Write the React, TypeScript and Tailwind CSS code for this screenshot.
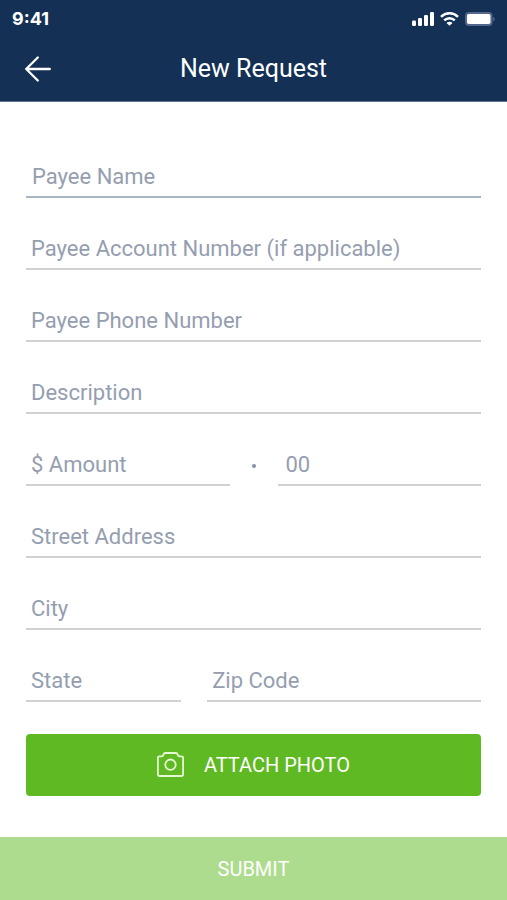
import type { InputHTMLAttributes } from "react";

type FieldProps = Omit<InputHTMLAttributes<HTMLInputElement>, "className"> & {
  label: string;
  active?: boolean;
  inset?: "sm" | "md" | "lg";
};

const insets = {
  sm: "px-[5px]",
  md: "px-1.5",
  lg: "px-2",
};

function Field({ label, active = false, inset = "sm", placeholder, ...rest }: FieldProps) {
  const tone = active
    ? "border-[#a9b5c2] focus:border-[#143055]"
    : "border-[#cfd1d5] focus:border-[#a9b5c2]";
  return (
    <input
      type="text"
      aria-label={label}
      placeholder={placeholder ?? label}
      className={`h-10 w-full min-w-0 rounded-none border-b-2 bg-transparent pb-0.5 text-[22px] leading-7 text-[#143055] outline-none placeholder:text-[#959eb0] placeholder:opacity-100 ${insets[inset]} ${tone}`}
      {...rest}
    />
  );
}

function StatusBar() {
  return (
    <div className="flex h-[37px] items-center justify-between px-3 text-white">
      <span className="font-[Inter,sans-serif] text-[18px] leading-6 font-bold">9:41</span>
      <div className="flex h-6 items-center gap-1.5">
        <svg width="22" height="14" viewBox="0 0 22 14" fill="currentColor" aria-hidden="true">
          <rect x="0" y="8.5" width="4" height="5.5" rx="1.2" />
          <rect x="6" y="6" width="4" height="8" rx="1.2" />
          <rect x="12" y="3" width="4" height="11" rx="1.2" />
          <rect x="18" y="0" width="4" height="14" rx="1.2" />
        </svg>
        <svg width="19" height="14" viewBox="0 0 19 14" fill="none" stroke="currentColor" strokeWidth="2.5" aria-hidden="true">
          <path d="M1 4.8a12.2 12.2 0 0 1 17 0" />
          <path d="M4.2 8.400a7.6 7.6 0 0 1 10.6 0" />
          <path d="M9.5 13.800 6.500 10.900a4.200 4.200 0 0 1 6 0z" fill="currentColor" stroke="none" />
        </svg>
        <svg width="30" height="14" viewBox="0 0 30 14" aria-hidden="true">
          <rect x="0" y="0" width="27.500" height="14" rx="4" fill="#52678a" />
          <rect x="2" y="2" width="23.500" height="10" rx="1.800" fill="#ffffff" />
          <path d="M28.200 4.8v4.6c1-.4 1.600-1.300 1.600-2.300s-.6-1.900-1.600-2.300z" fill="#52678a" />
        </svg>
      </div>
    </div>
  );
}

export default function App() {
  return (
    <div className="flex min-h-screen flex-col bg-white font-[Roboto,sans-serif]">
      <header className="border-b border-[#5f7590] bg-[#143055]">
        <StatusBar />
        <div className="grid h-16 grid-cols-[64px_1fr_64px] items-center text-white">
          <button type="button" aria-label="Back" className="flex h-12 items-center pl-6">
            <svg width="28" height="28" viewBox="0 0 28 28" fill="none" stroke="currentColor" strokeWidth="2.3" strokeLinecap="round" strokeLinejoin="round" aria-hidden="true">
              <path d="M13.800 2.500 2.200 14l11.600 11.500M2.200 14h23.600" />
            </svg>
          </button>
          <h1 className="text-center text-[25px] leading-8">New Request</h1>
        </div>
      </header>

      <form className="flex flex-1 flex-col" onSubmit={(e) => e.preventDefault()}>
        <div className="flex flex-col gap-8 px-[26px] pt-14 pb-10">
          <Field label="Payee Name" active inset="md" />
          <Field label="Payee Account Number (if applicable)" />
          <Field label="Payee Phone Number" type="tel" />
          <Field label="Description" />
          <div className="grid grid-cols-[1fr_48px_1fr] items-center">
            <Field label="Amount in dollars" placeholder="$ Amount" inputMode="numeric" />
            <span className="size-1 justify-self-center rounded-full bg-[#8791a6]" />
            <Field label="Cents" placeholder="00" inputMode="numeric" inset="lg" />
          </div>
          <Field label="Street Address" />
          <Field label="City" />
          <div className="grid grid-cols-[17fr_30fr] gap-[26px]">
            <Field label="State" />
            <Field label="Zip Code" inputMode="numeric" />
          </div>
          <button
            type="button"
            className="flex h-[62px] items-center justify-center gap-5 rounded bg-[#5fb922] text-[20px] leading-7 text-white"
          >
            <svg width="27" height="26" viewBox="0 0 27 26" fill="none" stroke="#e6f8d4" strokeWidth="1.800" strokeLinejoin="round" aria-hidden="true">
              <path d="M2.400 4.300H4.600Q6 4.300 6.400 2.800T8.200 1H18.800Q20.200 1 20.600 2.500T22.400 4.300H24.600A1.500 1.500 0 0 1 26.100 5.800V22.500A1.500 1.500 0 0 1 24.600 24H2.400A1.500 1.500 0 0 1 .9 22.500V5.800A1.500 1.500 0 0 1 2.400 4.300Z" />
              <circle cx="13.500" cy="12.700" r="5.200" />
            </svg>
            ATTACH PHOTO
          </button>
        </div>
        <button type="submit" className="mt-auto h-[63px] bg-[#addc8e] text-[20px] leading-7 text-white">
          SUBMIT
        </button>
      </form>
    </div>
  );
}
